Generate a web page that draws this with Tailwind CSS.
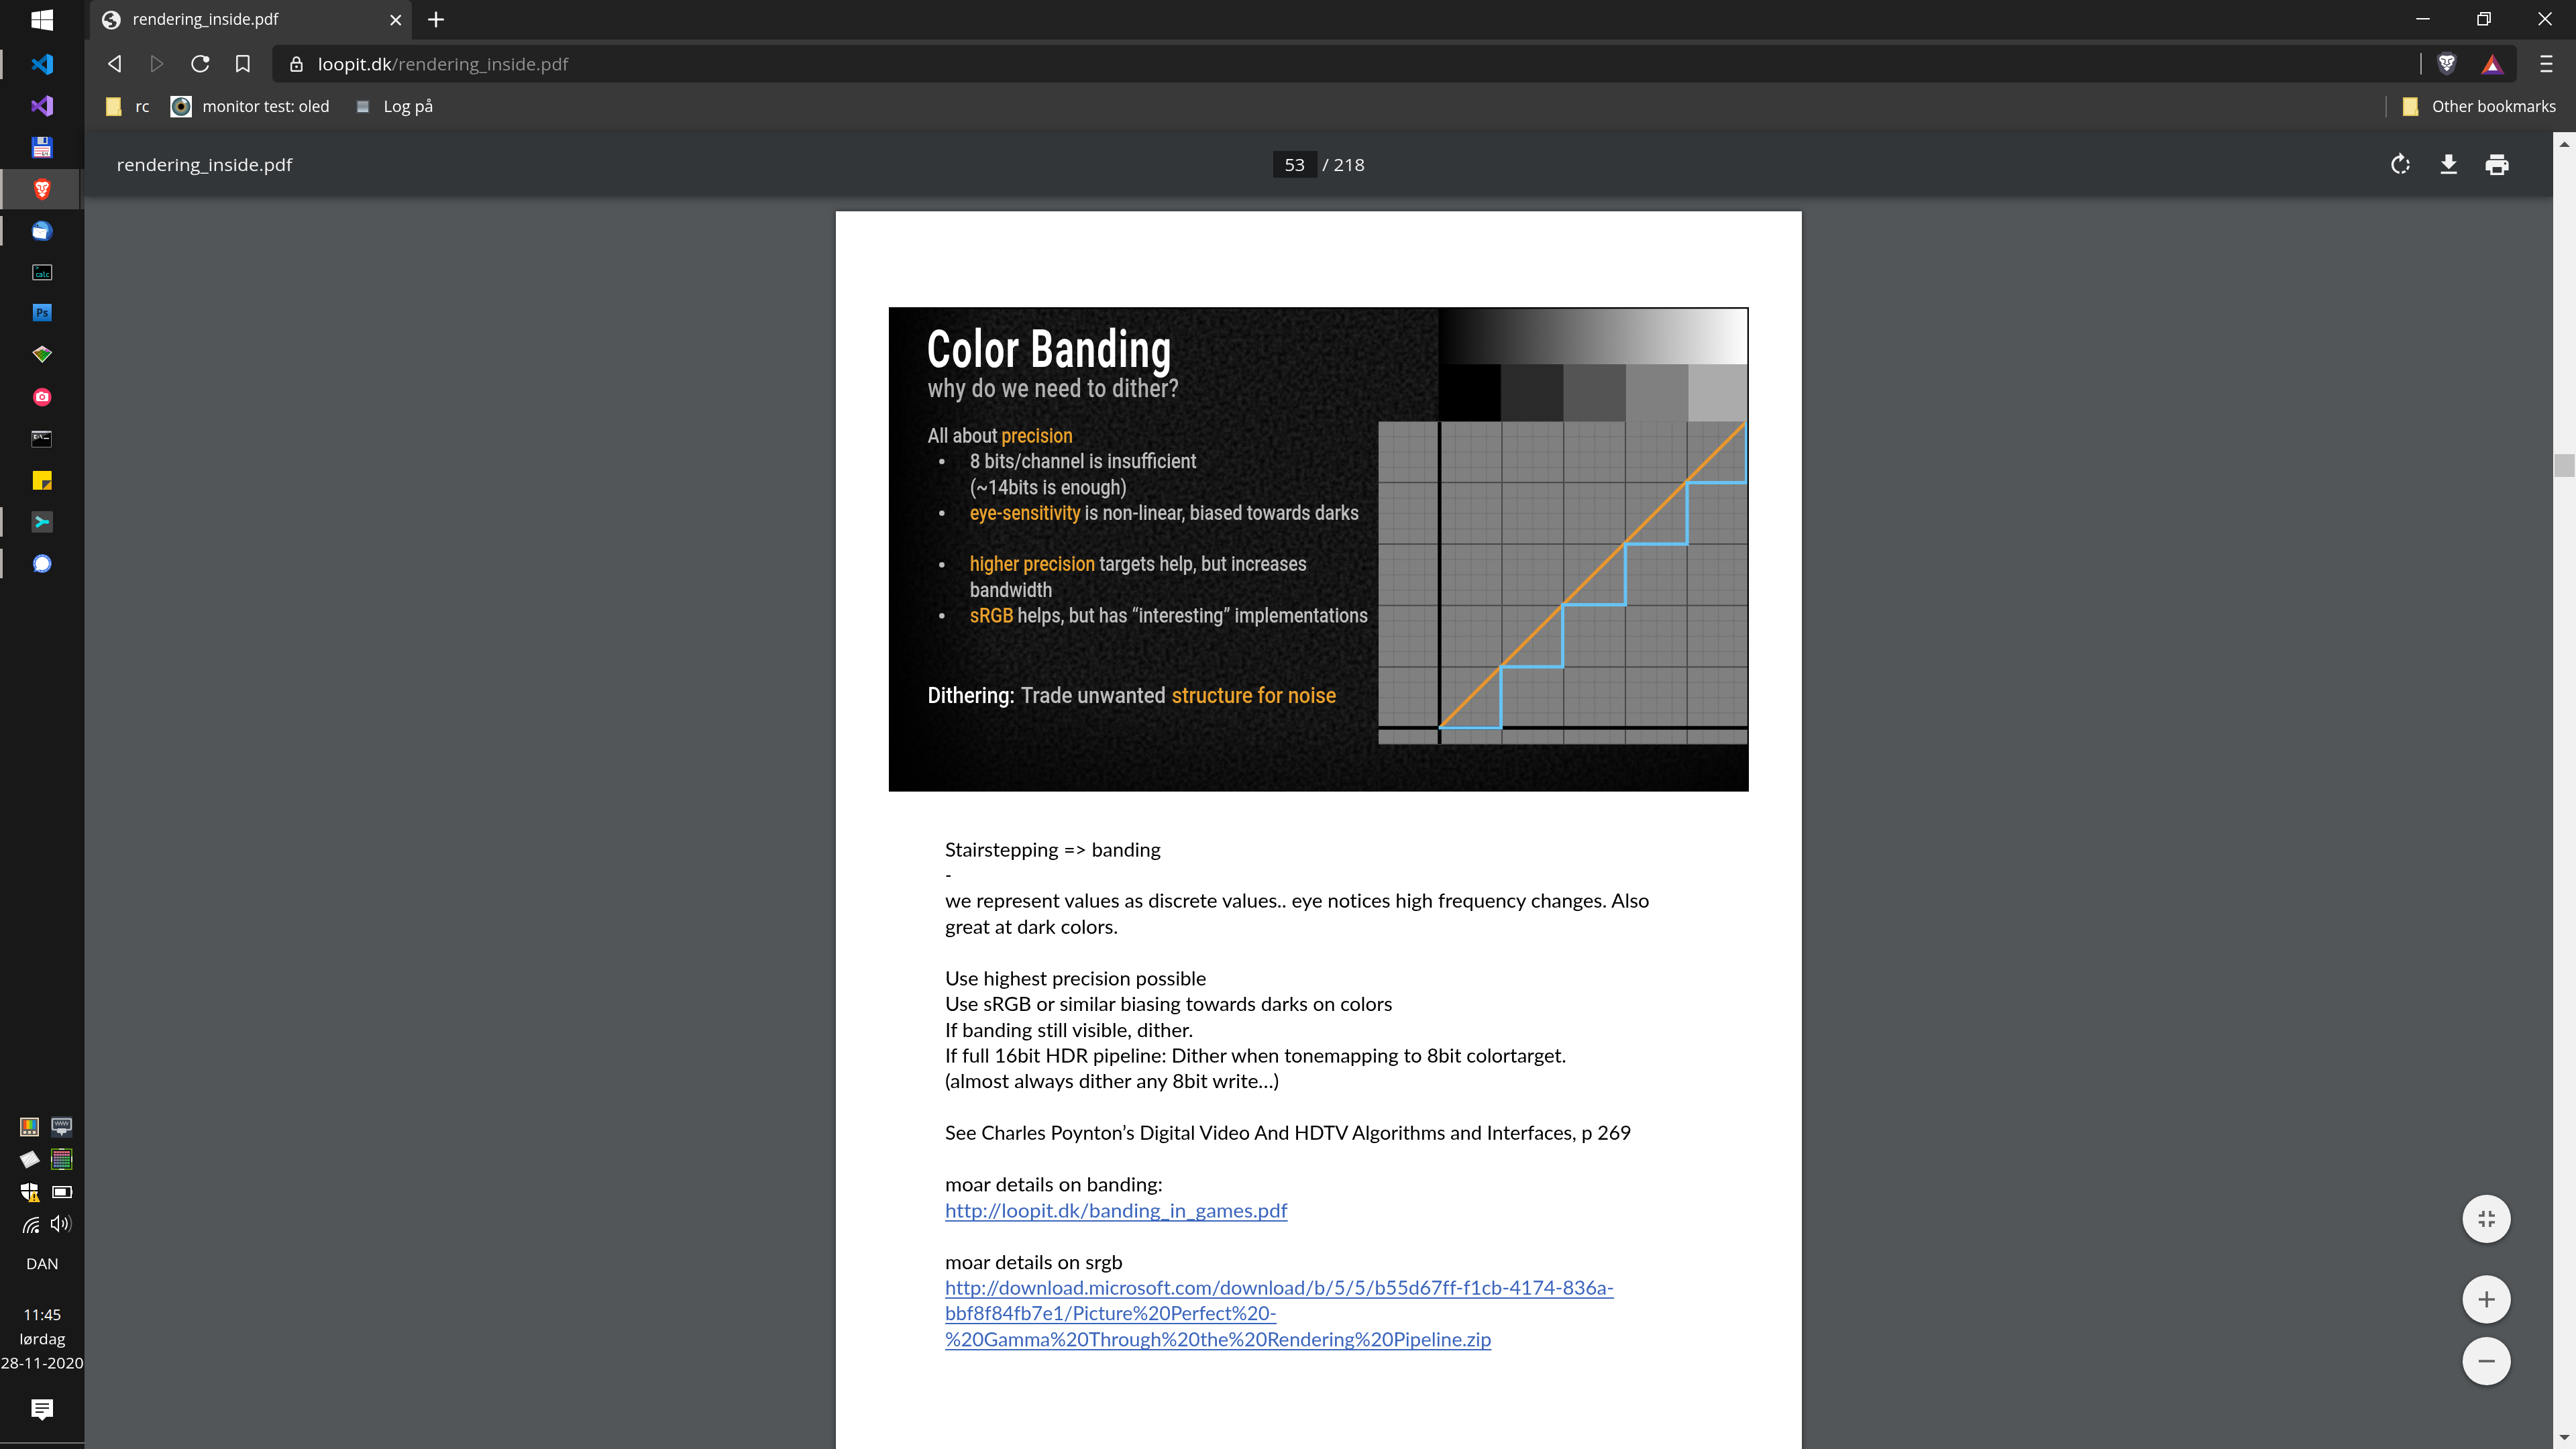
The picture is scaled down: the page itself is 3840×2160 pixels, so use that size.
<!DOCTYPE html>
<html lang="da">
<head>
<meta charset="utf-8">
<title>rendering_inside.pdf</title>
<script src="https://cdn.jsdelivr.net/npm/@tailwindcss/browser@4"></script>
</head>
<body class="flex h-[2160px] w-[3840px] overflow-hidden bg-[#525659] font-['Open_Sans','Noto_Sans',sans-serif] [&_[data-w]]:inline-block [&_[data-w]]:origin-left [&_[data-w]]:whitespace-nowrap">

<!-- Taskbar -->
<aside class="flex h-full w-[126px] shrink-0 flex-col bg-[#181818] text-white">
  <div class="flex h-[65px] items-start justify-center pt-[14px]">
    <svg class="size-8" viewBox="0 0 32 32" fill="#fff"><path d="M0 4.6 13 2.7V15H0zM14 2.5 32 0v15H14zM0 16h13v12.7L0 27zM14 16h18v16l-18-2.7z"/></svg>
  </div>
  <nav class="flex flex-col">
    <div class="flex h-[62px] items-center">
      <span class="h-11 w-1 bg-[#b3aea8]"></span>
      <svg class="ml-[43px] size-8" viewBox="0 0 32 32"><path d="M23 0v9L4 24.500 1.200 23q-2-1.500 0-3.200z" fill="#0065a9"/><path d="M1.200 9 4 7.500 23 23v9L1.200 12.500q-2-1.700 0-3.500z" fill="#007acc"/><path d="M23 0l7.500 3.200Q32 4 32 5.500v21q0 1.500-1.500 2.300L23 32z" fill="#1f9cf0"/></svg>
    </div>
    <div class="flex h-[62px] items-center justify-center">
      <svg class="size-8" viewBox="0 0 32 32"><path d="M0 9l3-1.500 2 .8v15.400l-2 .8L0 23z" fill="#5b2d96"/><path d="M3 7.500 23 24v8L0 11V9z" fill="#9a5fe0"/><path d="M23 0v8L3 24.500 0 23v-2z" fill="#7b3fc8"/><path d="M23 0l9 4v24l-9 4z" fill="#b98cf5"/></svg>
    </div>
    <div class="flex h-[62px] items-center justify-center">
      <svg class="size-8" viewBox="0 0 32 32"><path d="M0 0h29l3 3v29H2l-2-2z" fill="#1d50d0"/><path d="M2 1h1v29H2z" fill="#4f84ff"/><path d="M9 0h15v11H9z" fill="#c8ccd2"/><path d="M18 1h4v8h-4z" fill="#103ab0"/><path d="M4 14h24v15H4z" fill="#fff"/><path d="M5 17h21M5 21h21M5 25h10" stroke="#d0203a" stroke-width="1"/><path d="M4 29h24v2H4z" fill="#b04060"/><path d="M18 23h-1.500v4.500H19v-2h-2M21 23v2.500h3M23.500 23v5M26 26h1.500" stroke="#555" stroke-width="1" fill="none"/></svg>
    </div>
    <div class="flex h-[62px] items-center">
      <div class="flex h-[60px] w-[118px] items-center bg-[#464646]">
        <span class="h-full w-1 bg-[#b3aea8]"></span>
        <svg class="ml-[46px] h-[33px] w-[26px]" viewBox="0 0 26 33"><path d="M8 0h10l3 4 3-.5 2 4-1 3 .5 3-3.500 13Q21 29 13 33 5 29 4 26.500L.5 13.500 1 10.500 0 7.500l2-4 3 .5z" fill="#fb3b1e"/><path d="M5 6l4-1 4 1 4-1 4 1 2 4-3 5-2 1 2 3-4 3-3-2-3 2-4-3 2-3-2-1-3-5z" fill="#fff"/><path d="M8 24l5-3 5 3-5 4z" fill="#fff"/><path d="M6 10l5 1.500M20 10l-5 1.500M11 12l-1 5 3 2 3-2-1-5" stroke="#fb3b1e" stroke-width="1.500" fill="none"/></svg>
      </div>
      <div class="ml-[2px] h-[60px] flex-1 bg-[#3a3a3a]"></div>
    </div>
    <div class="flex h-[62px] items-center">
      <span class="h-11 w-1 bg-[#b3aea8]"></span>
      <svg class="ml-[43px] size-8" viewBox="0 0 32 32"><path d="M8 3Q11 0 14 1q10-1 15 7 4 5 3 12-1 7-9 11l-8 0Q2 29 1 22L0 14Q1 6 8 3z" fill="#2a62b5"/><path d="M8 5Q13 0 20 4q7 5 5 15l-5-5Q12 8 6 10z" fill="#5fb0ec"/><path d="M3 11l20 3-2 14L6 26 2 23z" fill="#fff"/><path d="M4 11l8 8 10-4" stroke="#c8c8c8" fill="none"/><path d="M2 25q3 5 7 6M24 28q6-4 7-10" stroke="#1d2f80" stroke-width="2" fill="none"/><circle cx="9" cy="8" r="1.300" fill="#222"/></svg>
    </div>
    <div class="flex h-[62px] items-center justify-center">
      <div class="flex h-6 w-[30px] flex-col rounded-[2px] border-2 border-[#9b9b9b] bg-black pl-[3px] font-['DejaVu_Sans_Mono',monospace] text-[8px] leading-[8px] text-[#25e4e4]"><span>&gt;</span><span class="text-[10px] leading-[11px] tracking-[-1px]">calc</span></div>
    </div>
    <div class="flex h-[62px] items-center justify-center pb-1">
      <div class="h-[26px] w-7 bg-linear-to-b from-[#4da6f8] to-[#0567b8] text-center text-[16px] leading-[26px] font-bold text-[#0e2a48]">Ps</div>
    </div>
    <div class="flex h-[62px] items-center justify-center pb-1">
      <svg class="h-[26px] w-[30px]" viewBox="0 0 30 26"><defs><linearGradient id="dm" x1="0" x2="1"><stop offset="0" stop-color="#a33"/><stop offset=".3" stop-color="#a80"/><stop offset=".6" stop-color="#1b2"/><stop offset="1" stop-color="#063"/></linearGradient></defs><path d="M15 1 29 10 15 25 1 10z" fill="url(#dm)" stroke="#fff" stroke-width="1.200"/><path d="M15 1 26 8 20 9 15 6 9 9 4 8z" fill="#f0c8c8"/><path d="M21 5l6 4-5 1-4-3z" fill="#d050d8"/><path d="M6 13l11-8M9 16l12-9M12 19l12-10M8 8l13 10M11 6l13 9M5 10l13 11" stroke="#0a3a10" stroke-width=".7"/></svg>
    </div>
    <div class="flex h-[62px] items-center justify-center">
      <svg class="size-7" viewBox="0 0 28 28"><circle cx="14" cy="14" r="13.700" fill="#fb3766"/><path d="M5 10q0-2 2-2h2l1-2h5l1 2h5q2 0 2 2v8q0 2-2 2H7q-2 0-2-2z" fill="#fff"/><circle cx="14" cy="14" r="3.400" fill="#fff" stroke="#fb3766" stroke-width="2"/></svg>
    </div>
    <div class="flex h-[62px] items-center justify-center pr-[2px]">
      <svg class="h-[25px] w-[30px]" viewBox="0 0 30 25"><path d="M.5.500h29v24H.5z" fill="#050505" stroke="#888"/><path d="M1 3h27L2 16z" fill="#444"/><path d="M1 1h28v2H1z" fill="#dce3ee"/><path d="M23 2h1M25 2h1M27 2h1" stroke="#346"/><path d="M7.500 7H4.500v4h3M10 8v1M10 10v1M13 6l3 6M18 11.500h8" stroke="#fff" stroke-width="1.400" fill="none"/></svg>
    </div>
    <div class="flex h-[62px] items-center justify-center">
      <svg class="size-7" viewBox="0 0 28 28"><path d="M1 0h26q1 0 1 1v26q0 1-1 1H1q-1 0-1-1V1q0-1 1-1z" fill="#ffd800"/><path d="M28 14v13q0 1-1 1H14z" fill="#e9a90c"/><path d="M14 14h14L14 28z" fill="#41414a"/></svg>
    </div>
    <div class="flex h-[62px] items-center">
      <span class="h-11 w-1 bg-[#b3aea8]"></span>
      <svg class="ml-[43px] size-8" viewBox="0 0 32 32"><rect width="32" height="32" rx="2" fill="#464646"/><path d="M7 9l11 7" stroke="#7ccfd2" stroke-width="5"/><path d="M7 23l10-7h7" stroke="#06e0e6" stroke-width="5" fill="none"/><circle cx="23.500" cy="16" r="2.700" fill="#06e0e6"/></svg>
    </div>
    <div class="flex h-[62px] items-center">
      <span class="h-11 w-1 bg-[#b3aea8]"></span>
      <svg class="ml-[45px] size-7" viewBox="0 0 28 28"><circle cx="14" cy="14" r="14" fill="#3a74e8"/><path d="M4 18 1 27l10-2z" fill="#3a74e8"/><circle cx="14" cy="14" r="12" fill="none" stroke="#fff" stroke-width="1" stroke-dasharray="4 1.500"/><circle cx="14" cy="14" r="10" fill="#fff"/><path d="M7 18 4 24l8-1z" fill="#fff"/></svg>
    </div>
  </nav>

  <div class="mt-auto flex flex-col items-center">
    <div class="ml-[10px] grid grid-cols-2 gap-4">
      <svg class="size-8" viewBox="0 0 32 32"><path d="M2 2h28v28H2z" fill="#ead9bd"/><path d="M4 4h24v24H4z" fill="#66605a"/><path d="M7 6h5v13H7z" fill="#f0501e"/><path d="M11.500 6H16v13h-4.500z" fill="#fbb80c"/><path d="M16 6h4.500v13H16z" fill="#5cc830"/><path d="M20.500 6H25v13h-4.500z" fill="#1590e4"/><path d="M7 22h4v4H7zM14 22h4v4h-4zM21 22h4v4h-4z" fill="#ead9bd"/></svg>
      <svg class="size-8" viewBox="0 0 32 32"><path d="M0 0h32v32H0z" fill="#303a46"/><path d="M3 4h26q1 0 1 1v13q0 2-2 2h-6v3H10v-3H4q-2 0-2-2V5q0-1 1-1z" fill="#303a46" stroke="#b9bcc0" stroke-width="2.500"/><path d="M6 8l2 5 2-5 2 5 2-5 2 5 2-5 2 5 2-5 2 5 2-5" stroke="#9a9da2" stroke-width="1.500" fill="none"/><path d="M10 18h12v7h-4l-2 5-2-5h-4z" fill="#c9ccd0"/></svg>
      <svg class="size-8" viewBox="0 0 32 32"><path d="M1 12l20-9 11 16-21 11z" fill="#cfcfcf"/><path d="M4 14l17-8 7 11-17 9z" fill="#f4f4f4"/><path d="M11 25 24 8M15 24 26 12M8 22 21 6" stroke="#bbb" stroke-width="1"/></svg>
      <svg class="size-8" viewBox="0 0 32 32"><defs><linearGradient id="px" x1="0" y1="0" x2="0" y2="1"><stop offset="0" stop-color="#f06a70"/><stop offset=".5" stop-color="#a070b8"/><stop offset="1" stop-color="#6078c8"/></linearGradient><linearGradient id="px2"><stop offset="0" stop-color="#28c838" stop-opacity="0"/><stop offset="1" stop-color="#28c838" stop-opacity=".9"/></linearGradient></defs><path d="M1 1h30v30H1z" fill="#14181c" stroke="#5f9a10" stroke-width="2"/><path d="M4 4h24v24H4z" fill="url(#px)"/><path d="M4 11h24v17H4z" fill="url(#px2)"/><path d="M3 7.500h26M3 11.500h26M3 15.500h26M3 19.500h26M3 23.500h26" stroke="#14181c" stroke-width="1"/><path d="M8 3v26M12 3v26M16 3v26M20 3v26M24 3v26" stroke="#14181c" stroke-width=".5"/><path d="M12 1h8M12 31h8M1 12v8M31 12v8" stroke="#fff" stroke-width="1.500"/></svg>
      <svg class="size-8" viewBox="0 0 32 32"><path d="M16 0q6 5 14 5v9q0 12-14 17Q2 26 2 14V5q8 0 14-5z" fill="#000"/><path d="M15 3v11H3V6q7 0 12-3zM17 3q5 3 11 3v8H17zM3.500 16H15v13Q5 25 3.500 16zM17 16h11.500Q27 25 17 29z" fill="#fff"/><path d="M23 14l9 18H14z" fill="#ffc320"/><path d="M23 20v6M23 28v2" stroke="#111" stroke-width="2"/></svg>
      <svg class="size-8" viewBox="0 0 32 32"><path d="M3 9h27v16H3z" fill="none" stroke="#fff" stroke-width="2"/><path d="M6 12h16v10H6zM30 14h2v6h-2z" fill="#fff"/></svg>
      <svg class="size-8" viewBox="0 0 32 32" fill="none" stroke="#fff" stroke-width="2"><path d="M7 30Q8 8 30 7M13 30Q14 14 30 13M19 30Q20 20 30 19"/><circle cx="27" cy="27" r="3" fill="#fff" stroke="none"/></svg>
      <svg class="size-8" viewBox="0 0 32 32" fill="none" stroke="#fff" stroke-width="2"><path d="M1 11h4l6-6v22l-6-6H1zM17 11q3 5 0 10M21 7q6 9 0 18"/><path d="M26 3q9 13 0 26" stroke="#6a6a6a"/></svg>
    </div>
    <div class="mt-[25px] text-[22px] leading-9"><span data-w="48">DAN</span></div>
    <div class="mt-10 flex flex-col items-center text-[22px] leading-9">
      <div><span data-w="56">11:45</span></div>
      <div><span data-w="68">lørdag</span></div>
      <div><span data-w="124">28-11-2020</span></div>
    </div>
    <svg class="mt-[37px] size-8" viewBox="0 0 32 32"><path d="M0 0h32v26H22l-6 6-6-6H0z" fill="#fff"/><path d="M6 7h20M6 13h20M6 19h12" stroke="#181818" stroke-width="2"/></svg>
    <div class="mt-8 mb-2 h-[2px] w-full bg-[#777]"></div>
  </div>
</aside>

<main class="flex min-w-0 flex-1 flex-col">
  <!-- Tab strip -->
  <header class="flex h-[59px] shrink-0 bg-[#222] pl-2 text-[23px] text-white">
    <div class="flex h-full w-[480px] items-center rounded-t-lg bg-[#393939] pr-4 pl-[18px]">
      <svg class="size-7" viewBox="0 0 28 28"><circle cx="14" cy="14" r="14" fill="#ececec"/><path d="M15 3.200Q8 3 5 8q-2 4-1.500 7H8l2 2v0l5 1v3l-5 1v2.500q6 1.500 10-1.500l2-5-2-2.500h-3l-1-3h-5v-2l4-1V7.500h3z" fill="#393939"/></svg>
      <span class="ml-[18px] -translate-y-[2px] leading-7"><span data-w="217">rendering_inside.pdf</span></span>
      <svg class="ml-auto size-4" viewBox="0 0 16 16"><path d="M1.500 1.500l13 13m0-13l-13 13" stroke="#f2f2f2" stroke-width="2.800" stroke-linecap="round"/></svg>
    </div>
    <svg class="mt-[17px] ml-6 size-6" viewBox="0 0 24 24"><path d="M12 1.500v21M1.500 12h21" stroke="#fff" stroke-width="3" stroke-linecap="round"/></svg>
    <div class="mr-9 ml-auto flex items-center gap-[71px] pb-[3px]">
      <svg class="size-5" viewBox="0 0 20 20"><path d="M0 10h20" stroke="#fff" stroke-width="2"/></svg>
      <svg class="size-5" viewBox="0 0 20 20" fill="none" stroke="#fff" stroke-width="2"><path d="M1 5h14v14H1zM5 5V1h14v14h-4"/></svg>
      <svg class="size-5" viewBox="0 0 20 20"><path d="M.5.500l19 19m0-19l-19 19" stroke="#fff" stroke-width="2"/></svg>
    </div>
  </header>

  <!-- Address bar -->
  <div class="flex h-[72px] shrink-0 items-center bg-[#393939] pr-[35px] pl-[35px]">
    <svg class="h-[26px] w-[19px]" viewBox="0 0 19 26"><path d="M17.700 1.500v23q0 .5-1 0L1.800 13.700q-.6-.7 0-1.400L16.700 1.500q1-.5 1 0z" fill="none" stroke="#f0f0f0" stroke-width="2.500" stroke-linejoin="round"/></svg>
    <svg class="ml-[45px] h-[26px] w-[19px]" viewBox="0 0 19 26"><path d="M1.300 1.500v23q0 .5 1 0l14.900-10.800q.6-.7 0-1.400L2.300 1.500q-1-.5-1 0z" fill="none" stroke="#777" stroke-width="2" stroke-linejoin="round"/></svg>
    <svg class="ml-[41px] h-[26px] w-7" viewBox="0 0 28 26"><path d="M25 16.500A12 11.700 0 1 1 20.500 3.500" fill="none" stroke="#f0f0f0" stroke-width="2.500" stroke-linecap="round"/><circle cx="22.500" cy="6.500" r="4.700" fill="#f0f0f0"/></svg>
    <svg class="ml-[39px] h-[26px] w-5" viewBox="0 0 20 26"><path d="M1.300 3q0-1.700 1.700-1.700h14q1.700 0 1.700 1.700v21.500L10 19l-8.700 5.500z" fill="none" stroke="#f0f0f0" stroke-width="2.500" stroke-linejoin="round"/></svg>
    <div class="ml-[34px] flex h-14 w-[3346px] items-center rounded-lg bg-[#222] pr-[18px] pl-[27px] text-[26px]">
      <svg class="h-[23px] w-[18px]" viewBox="0 0 18 23"><rect x="1.200" y="9.500" width="15.600" height="12.300" rx="1.500" fill="none" stroke="#ececec" stroke-width="2.400"/><path d="M4.500 9.500V6q0-4.700 4.500-4.700T13.500 6v3.500" fill="none" stroke="#ececec" stroke-width="2.400"/><circle cx="9" cy="15.500" r="2" fill="#ececec"/></svg>
      <span class="ml-[23px] text-white"><span data-w="110">loopit.dk</span></span><span class="text-[#8f8f8f]"><span data-w="263">/rendering_inside.pdf</span></span>
      <div class="ml-auto flex items-center">
        <span class="h-8 w-[2px] bg-[#a8a8a8]"></span>
        <svg class="ml-[22px] h-9 w-[31px]" viewBox="0 0 31 36"><path d="M9 0h13l3 4 3-.500 3 4-1 3 .5 3-4 14Q26 31 15.500 36 5 31 4.500 27.500L.5 13.500l.5-3-1-3 3-4 3 .5z" fill="#4d4d5d"/><path d="M5 8l4-2.500 6.500 1L22 5.500 26 8l1 4-4 5 1 2-5 4-3.500-2-3.500 2-5-4 1-2-4-5z" fill="#fff"/><path d="M11 25l4.500-3 4.500 3-4.500 4z" fill="#fff"/><path d="M7 10.500l6 1.500M24 10.500l-6 1.500M13 12v4l-2 2 4.500 2 4.500-2-2-2v-4" stroke="#4d4d5d" stroke-width="1.500" fill="none"/></svg>
        <svg class="ml-[35px] h-[31px] w-9" viewBox="0 0 36 31"><path d="M18 0v13L11 25 0 31z" fill="#e2572e"/><path d="M18 0l18 31-11-6-7-12z" fill="#8d2e65"/><path d="M0 31l11-6h14l11 6z" fill="#5f3095"/><path d="M18 13l7 12H11z" fill="#fff"/></svg>
      </div>
    </div>
    <svg class="ml-auto h-[26px] w-[18px]" viewBox="0 0 18 26"><path d="M1.500 2h15M1.500 13h15M1.500 24h15" stroke="#f4f4f4" stroke-width="3" stroke-linecap="round"/></svg>
  </div>

  <!-- Bookmarks -->
  <div class="flex h-[66px] shrink-0 items-start bg-[#393939] pt-3 pr-[29px] pl-8 text-[23px] text-white">
    <div class="flex h-8 flex-1 items-center">
      <svg class="h-7 w-6" viewBox="0 0 24 28"><path d="M1 1h20v26H1z" fill="#f7e59c" stroke="#e0c256" stroke-width="2"/><path d="M18.500 19h4v8h-4z" fill="#f7e59c" stroke="#e0c256" stroke-width="1.500"/></svg>
      <span class="ml-[20px] -translate-y-px leading-8"><span data-w="20">rc</span></span>
      <svg class="ml-8 size-8" viewBox="0 0 32 32"><defs><radialGradient id="iris"><stop offset=".3" stop-color="#7a5a28"/><stop offset=".45" stop-color="#b89858"/><stop offset=".6" stop-color="#6c9090"/><stop offset="1" stop-color="#274a54"/></radialGradient></defs><path d="M0 0h32v32H0z" fill="#fff"/><circle cx="16" cy="16" r="13.800" fill="url(#iris)"/><circle cx="16" cy="16" r="4.300" fill="#000"/><path d="M17 4q7 1 8 6l-5 1q-1-3-3-4z" fill="#dfeaf0"/></svg>
      <span class="ml-4 -translate-y-px leading-8"><span data-w="189">monitor test: oled</span></span>
      <span class="ml-[39px] size-5 border-2 border-[#49525a] bg-linear-to-b from-[#a3a3a6] via-[#7d8890] to-[#c3d5e2]"></span>
      <span class="ml-[21px] -translate-y-px leading-8"><span data-w="74">Log på</span></span>
    </div>
    <div class="flex h-8 items-center">
      <span class="h-8 w-[2px] bg-[#6c6c6c]"></span>
      <svg class="ml-6 h-7 w-6" viewBox="0 0 24 28"><path d="M1 1h20v26H1z" fill="#f7e59c" stroke="#e0c256" stroke-width="2"/><path d="M18.500 19h4v8h-4z" fill="#f7e59c" stroke="#e0c256" stroke-width="1.500"/></svg>
      <span class="ml-5 -translate-y-px leading-8"><span data-w="185">Other bookmarks</span></span>
    </div>
  </div>

  <!-- PDF viewer -->
  <div class="flex min-h-0 flex-1">
    <section class="flex min-w-0 flex-1 flex-col">
      <div class="relative z-10 grid h-24 shrink-0 grid-cols-3 items-center bg-[#323639] pr-[63px] pl-12 text-[26px] text-[#f1f1f1] shadow-[0_2px_12px_rgba(0,0,0,0.45)]">
        <span><span data-w="262">rendering_inside.pdf</span></span>
        <div class="flex items-center justify-center pl-[15px]">
          <span class="flex h-10 w-[66px] items-center justify-center bg-[#191b1c]"><span data-w="31">53</span></span>
          <span class="ml-[7px]"><span data-w="64">/ 218</span></span>
        </div>
        <div class="flex justify-end gap-[31px]">
          <svg class="size-[41px]" viewBox="0 0 24 24" fill="#f1f1f1"><path d="M15.550 5.550L11 1v3.070C7.060 4.560 4 7.920 4 12s3.050 7.440 7 7.930v-2.020c-2.840-.48-5-2.940-5-5.910s2.160-5.430 5-5.910V10l4.550-4.450zM19.930 11c-.17-1.390-.72-2.730-1.620-3.890l-1.420 1.420c.54.750.88 1.600 1.020 2.470h2.020zM13 17.900v2.020c1.390-.17 2.740-.71 3.900-1.610l-1.440-1.440c-.75.540-1.590.890-2.460 1.030zm3.890-2.420l1.420 1.410c.9-1.160 1.450-2.500 1.620-3.890h-2.020c-.14.870-.48 1.720-1.020 2.480z"/></svg>
          <svg class="size-[41px]" viewBox="0 0 24 24" fill="#f1f1f1"><path d="M19 9h-4V3H9v6H5l7 7 7-7zM5 18v2h14v-2H5z"/></svg>
          <svg class="size-[41px]" viewBox="0 0 24 24" fill="#f1f1f1"><path d="M19 8H5c-1.660 0-3 1.340-3 3v6h4v4h12v-4h4v-6c0-1.660-1.340-3-3-3zm-3 11H8v-5h8v5zm3-7c-.55 0-1-.45-1-1s.45-1 1-1 1 .45 1 1-.45 1-1 1zm-1-9H6v4h12V3z"/></svg>
        </div>
      </div>

      <div class="relative min-h-0 flex-1 overflow-hidden">
        <article class="mt-[22px] ml-[1120px] flex h-[1900px] w-[1440px] flex-col bg-white pt-[143px] pl-[79px] text-black shadow-[0_0_8px_rgba(0,0,0,0.5)]">
          <!-- Slide -->
          <div class="relative h-[722px] w-[1282px] shrink-0 overflow-hidden bg-black font-['Roboto',sans-serif] font-medium text-[#bdbdbd]">
            <svg class="absolute inset-0 size-full" viewBox="0 0 1282 722">
              <defs>
                <filter id="grain" x="0" y="0" width="100%" height="100%" color-interpolation-filters="sRGB"><feTurbulence type="fractalNoise" baseFrequency="0.15" numOctaves="2" seed="4"/><feColorMatrix values="0.17 0 0 0 -0.005  0.17 0 0 0 -0.005  0.17 0 0 0 -0.005  0 0 0 0 1"/></filter>
                <linearGradient id="edgeL"><stop offset="0" stop-color="#000"/><stop offset=".12" stop-color="#000" stop-opacity="0"/></linearGradient>
                <radialGradient id="vig" cx=".5" cy=".35" r=".85"><stop offset=".6" stop-color="#000" stop-opacity="0"/><stop offset="1" stop-color="#000"/></radialGradient>
                <linearGradient id="ramp"><stop offset="0" stop-color="#000"/><stop offset="1" stop-color="#fff"/></linearGradient>
                <pattern id="minor" x="821" y="261" width="23.050" height="22.880" patternUnits="userSpaceOnUse"><path d="M0 .7H23M.7 0V23" stroke="#686868" stroke-width="1.200" stroke-dasharray="2.500 1.500"/></pattern>
              </defs>
              <rect width="1282" height="722" filter="url(#grain)"/>
              <rect width="1282" height="722" fill="url(#edgeL)"/>
              <rect width="1282" height="722" fill="url(#vig)"/>
              <rect x="819.500" y="2" width="460.500" height="83" fill="url(#ramp)"/>
              <rect x="819.500" y="85" width="93" height="86" fill="#000"/>
              <rect x="912.500" y="85" width="93" height="86" fill="#2a2a2a"/>
              <rect x="1005.500" y="85" width="93.500" height="86" fill="#545454"/>
              <rect x="1099" y="85" width="93" height="86" fill="#808080"/>
              <rect x="1192" y="85" width="88" height="86" fill="#ababab"/>
              <rect x="730" y="170.500" width="550" height="481" fill="#808080"/>
              <rect x="730" y="170.500" width="550" height="481" fill="url(#minor)"/>
              <path d="M914 171v480M1006 171v480M1098 171v480M1190 171v480M730 261.200h550M730 353h550M730 444.500h550M730 536.200h550" stroke="#484848" stroke-width="2"/>
              <path d="M821 171v480M730 627h550" stroke="#000" stroke-width="5.500"/>
              <path d="M821 627 1278 171" stroke="#e8962e" stroke-width="5"/>
              <path d="M819.500 627H912.500V536H1004.500V443.500H1098V353H1190V261.500H1278.500V171" fill="none" stroke="#66c3f5" stroke-width="5"/>
              <path d="M1281 0v722M0 1h1282" stroke="#000" stroke-width="2.500"/>
            </svg>
            <div class="relative flex flex-col pt-[25px] pl-[58px] whitespace-nowrap">
              <div class="-ml-px text-[78px] leading-[76px] font-bold tracking-[0.04em] text-white"><span data-w="366">Color Banding</span></div>
              <div class="text-[39px] leading-10 font-medium tracking-[0.02em] text-[#b0b0b0]"><span data-w="375">why do we need to dither?</span></div>
              <div class="mt-8 flex flex-col text-[31px] leading-[38.3px]">
                <div><span data-w="104">All about</span><span class="ml-[6px] text-[#e8a02c]" data-w="106">precision</span></div>
                <div class="flex items-center"><i class="mr-[38px] ml-[17px] size-2 rounded-full bg-[#bdbdbd]"></i><span><span data-w="338">8 bits/channel is insufficient</span></span></div>
                <div class="pl-[63px]"><span data-w="234">(~14bits is enough)</span></div>
                <div class="flex items-center"><i class="mr-[38px] ml-[17px] size-2 rounded-full bg-[#bdbdbd]"></i><span><span class="text-[#e8a02c]" data-w="165">eye-sensitivity</span><span class="ml-[6px]" data-w="409">is non-linear, biased towards darks</span></span></div>
                <div class="mt-[38.3px] flex items-center"><i class="mr-[38px] ml-[17px] size-2 rounded-full bg-[#bdbdbd]"></i><span><span class="text-[#e8a02c]" data-w="187">higher precision</span><span class="ml-[6px]" data-w="309">targets help, but increases</span></span></div>
                <div class="pl-[63px]"><span data-w="123">bandwidth</span></div>
                <div class="flex items-center"><i class="mr-[38px] ml-[17px] size-2 rounded-full bg-[#bdbdbd]"></i><span><span class="text-[#e8a02c]" data-w="65">sRGB</span><span class="ml-[6px]" data-w="523">helps, but has “interesting” implementations</span></span></div>
              </div>
              <div class="mt-[80px] text-[33px] leading-10"><span class="text-white" data-w="130">Dithering:</span><span class="ml-[9px]" data-w="216">Trade unwanted</span><span class="ml-[9px] text-[#e8a02c]" data-w="245">structure for noise</span></div>
            </div>
          </div>

          <!-- Speaker notes -->
          <div class="mt-[66.500px] flex flex-col pl-[84px] font-['Lato',sans-serif] text-[28.500px] leading-[38.440px] whitespace-nowrap [font-variant-ligatures:none]">
            <div><span data-w="322">Stairstepping =&gt; banding</span></div>
            <div><span data-w="10">-</span></div>
            <div><span data-w="1050">we represent values as discrete values.. eye notices high frequency changes. Also</span></div>
            <div><span data-w="258">great at dark colors.</span></div>
            <div class="mt-[38.440px]"><span data-w="390">Use highest precision possible</span></div>
            <div><span data-w="667">Use sRGB or similar biasing towards darks on colors</span></div>
            <div><span data-w="370">If banding still visible, dither.</span></div>
            <div><span data-w="926">If full 16bit HDR pipeline: Dither when tonemapping to 8bit colortarget.</span></div>
            <div><span data-w="498">(almost always dither any 8bit write…)</span></div>
            <div class="mt-[38.440px]"><span data-w="1023">See Charles Poynton’s Digital Video And HDTV Algorithms and Interfaces, p 269</span></div>
            <div class="mt-[38.440px]"><span data-w="324">moar details on banding:</span></div>
            <div class="text-[#3c66bd]"><span class="underline decoration-2 underline-offset-4 [text-decoration-skip-ink:none]" data-w="511">http://loopit.dk/banding_in_games.pdf</span></div>
            <div class="mt-[38.440px]"><span data-w="265">moar details on srgb</span></div>
            <div class="text-[#3c66bd]"><span class="underline decoration-2 underline-offset-4 [text-decoration-skip-ink:none]" data-w="997">http://download.microsoft.com/download/b/5/5/b55d67ff-f1cb-4174-836a-</span></div>
            <div class="text-[#3c66bd]"><span class="underline decoration-2 underline-offset-4 [text-decoration-skip-ink:none]" data-w="494">bbf8f84fb7e1/Picture%20Perfect%20-</span></div>
            <div class="text-[#3c66bd]"><span class="underline decoration-2 underline-offset-4 [text-decoration-skip-ink:none]" data-w="814">%20Gamma%20Through%20the%20Rendering%20Pipeline.zip</span></div>
          </div>
        </article>

        <!-- Zoom controls -->
        <div class="absolute right-[63px] bottom-[95px] flex flex-col">
          <button class="flex size-[72px] items-center justify-center rounded-full bg-[#f1f1f1] shadow-[0_2px_6px_rgba(0,0,0,0.5)]"><svg class="size-6" viewBox="0 0 24 24" fill="none" stroke="#616161" stroke-width="3.600"><path d="M0 7h7V0M24 7h-7V0M0 17h7v7M24 17h-7v7"/></svg></button>
          <button class="mt-12 flex size-[72px] items-center justify-center rounded-full bg-[#f1f1f1] shadow-[0_2px_6px_rgba(0,0,0,0.5)]"><svg class="size-6" viewBox="0 0 24 24"><path d="M0 12h24M12 0v24" stroke="#616161" stroke-width="3.600"/></svg></button>
          <button class="mt-5 flex size-[72px] items-center justify-center rounded-full bg-[#f1f1f1] shadow-[0_2px_6px_rgba(0,0,0,0.5)]"><svg class="size-6" viewBox="0 0 24 24"><path d="M0 12h24" stroke="#616161" stroke-width="3.600"/></svg></button>
        </div>
      </div>
    </section>

    <!-- Scrollbar -->
    <div class="relative z-20 flex w-[34px] shrink-0 flex-col items-center bg-[#f0f0f0]">
      <svg class="mt-[14px] h-2 w-4" viewBox="0 0 16 8"><path d="M8 0l8 8H0z" fill="#505050"/></svg>
      <div class="mt-[458px] h-[34px] w-[30px] bg-[#c1c1c1]"></div>
      <svg class="mt-auto mb-[13px] h-2 w-4" viewBox="0 0 16 8"><path d="M0 0h16L8 8z" fill="#505050"/></svg>
    </div>
  </div>
</main>

<script>
  // Condense or widen each label to its width in px (data-w), again whenever its natural size changes.
  function fit(el) {
    var natural = el.offsetWidth;
    if (!natural) return;
    var target = Number(el.dataset.w);
    el.style.transform = 'scaleX(' + target / natural + ')';
    el.style.marginRight = (target - natural) + 'px';
  }
  var labels = document.querySelectorAll('[data-w]');
  var watcher = new ResizeObserver(function (entries) {
    entries.forEach(function (entry) { fit(entry.target); });
  });
  labels.forEach(function (el) { watcher.observe(el); });
  window.addEventListener('load', function () { labels.forEach(fit); });
  document.fonts.ready.then(function () { labels.forEach(fit); });
</script>
</body>
</html>
